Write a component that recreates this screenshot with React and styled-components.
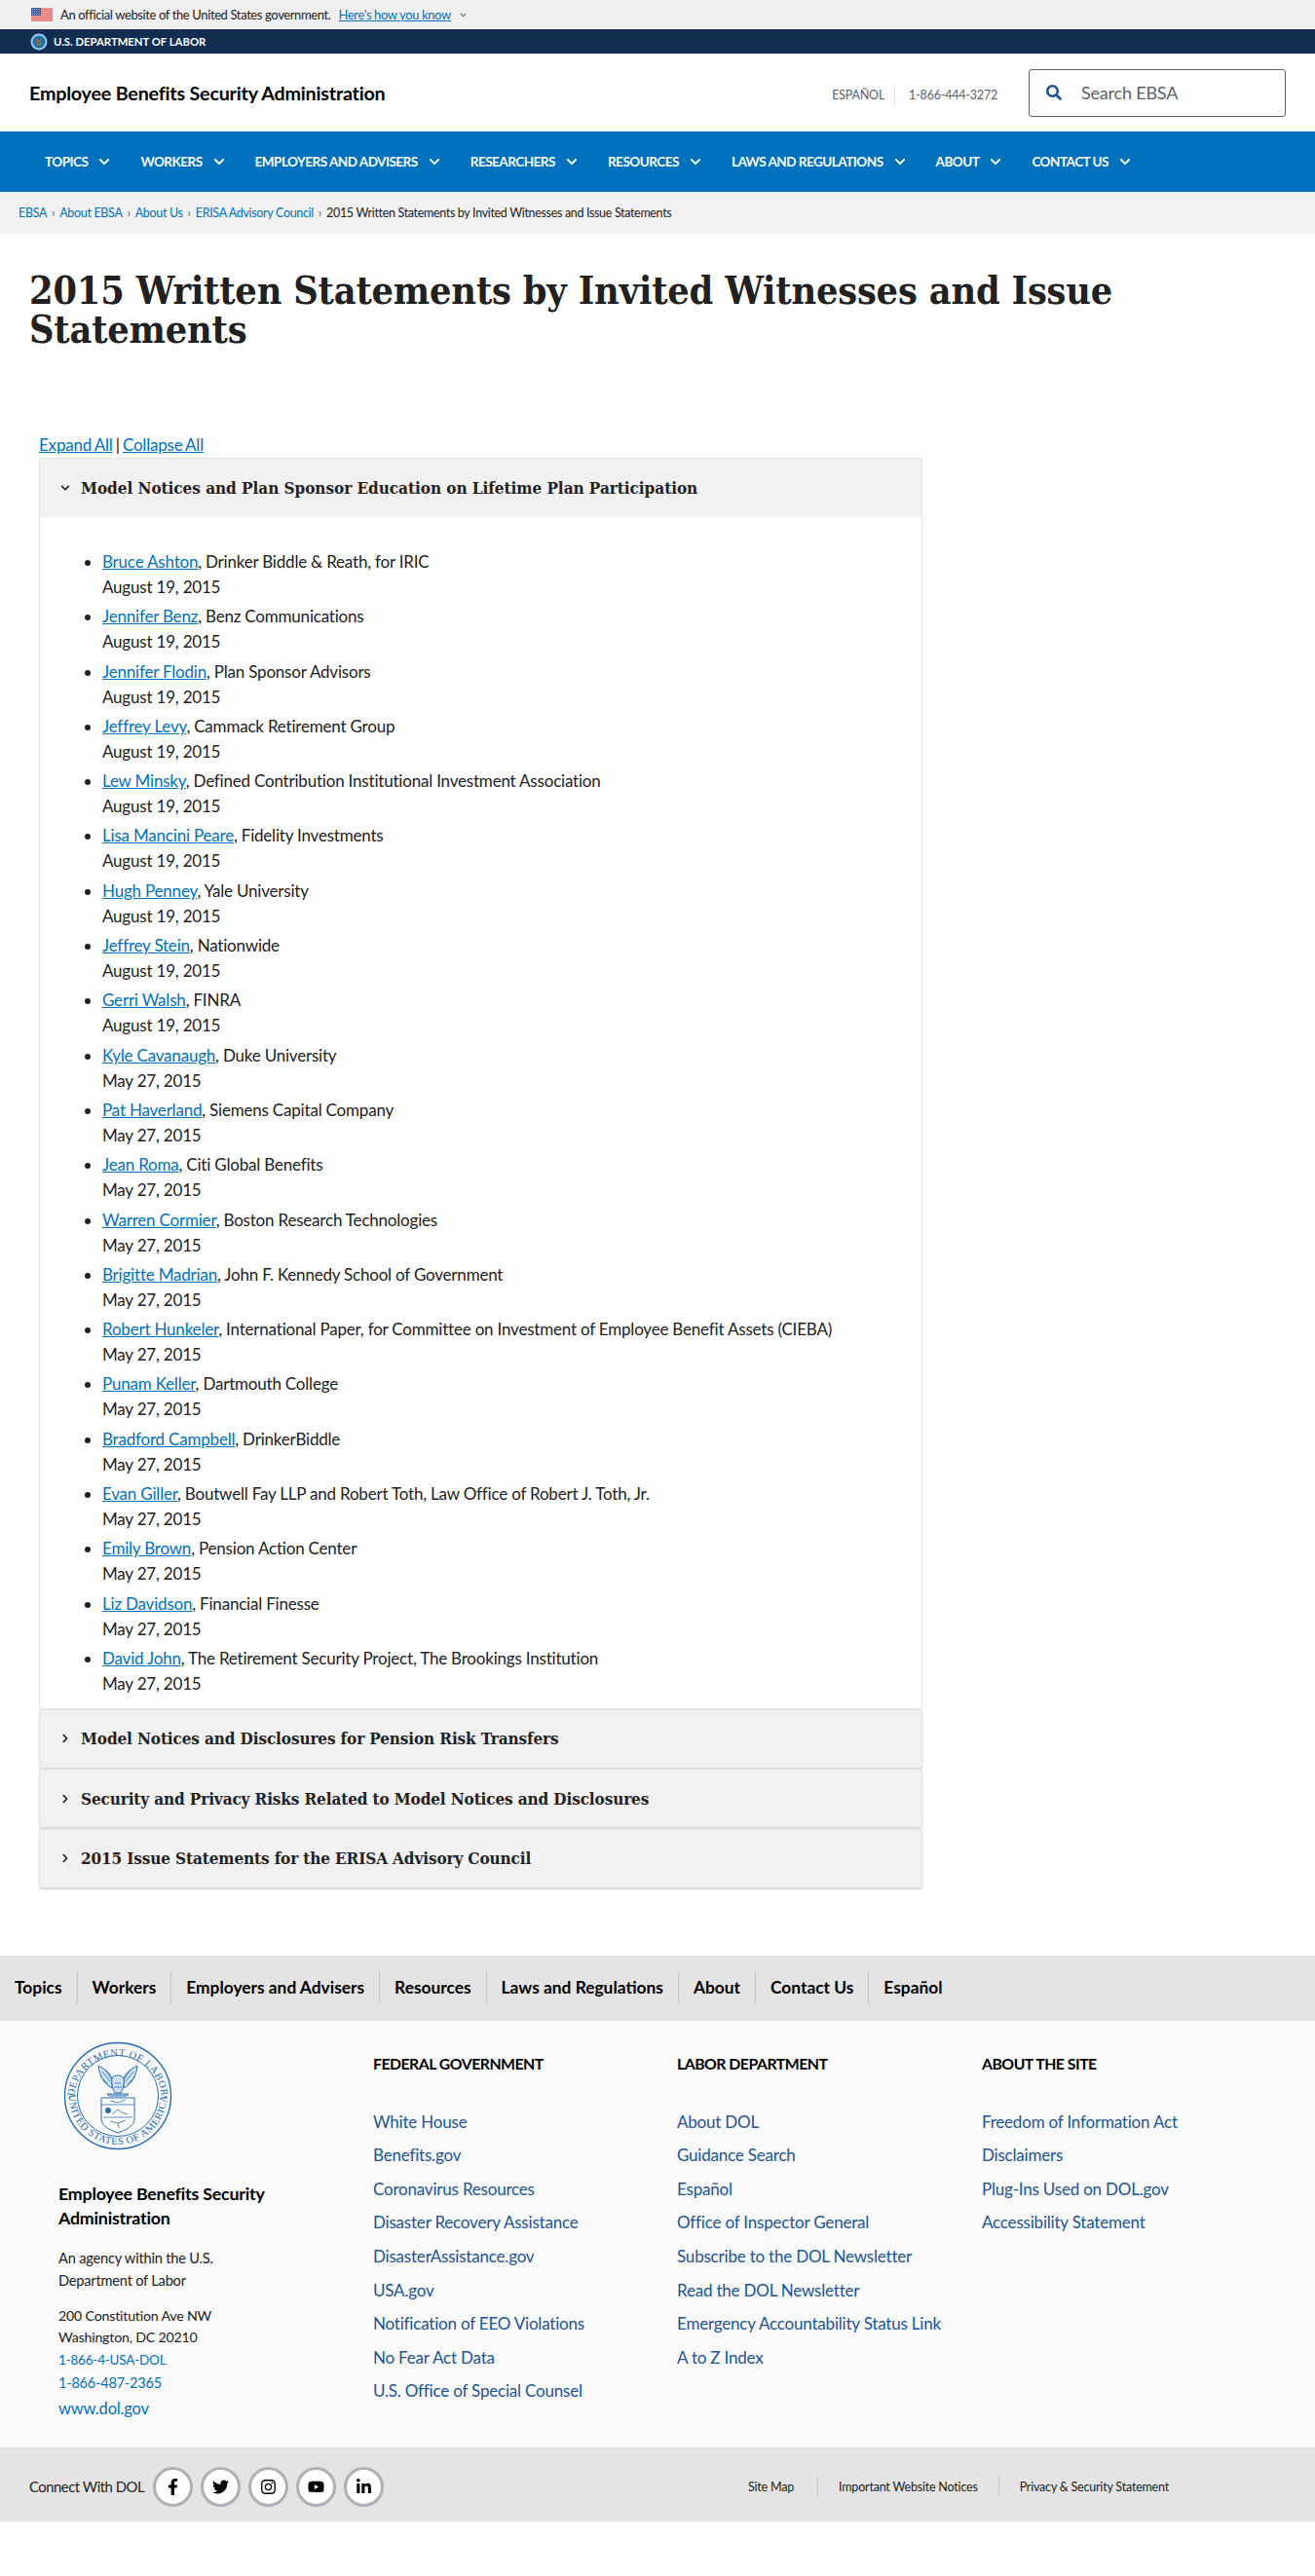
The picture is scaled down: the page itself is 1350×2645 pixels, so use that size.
import React from 'react';
import styled, { createGlobalStyle } from 'styled-components';
import { FaChevronDown, FaChevronRight, FaSearch, FaFacebookF, FaTwitter, FaInstagram, FaYoutube, FaLinkedinIn } from 'react-icons/fa';

const GlobalStyle = createGlobalStyle`
	html, body {
		margin: 0;
		padding: 0;
		background: #fff;
	}
	body {
		font-family: 'Lato', 'Liberation Sans', sans-serif;
		font-size: 17px;
		letter-spacing: -0.2px;
		color: #212121;
	}
`;

const SERIF = `'DejaVu Serif Condensed', 'DejaVu Serif', serif`;

const BannerBar = styled.div`
	display: flex;
	align-items: center;
	height: 30px;
	padding-left: 32px;
	background: #f0f0f0;
	font-size: 13px;
	letter-spacing: -0.38px;
	color: #212121;
`;

const BannerLink = styled.a`
	margin-left: 8px;
	color: #0071bc;
	text-decoration: underline;
`;

const BannerText = styled.span`
	margin-left: 8px;
`;

const BannerChevron = styled(FaChevronDown)`
	margin-left: 9px;
	font-size: 7px;
	color: #5b616b;
`;

const AgencyBar = styled.div`
	display: flex;
	align-items: center;
	height: 25px;
	padding-left: 31px;
	background: #112e51;
	color: #fff;
	font-size: 11.3px;
	font-weight: 700;
	letter-spacing: 0;
`;

const AgencyName = styled.span`
	margin-left: 6px;
`;

const SiteHeader = styled.header`
	display: flex;
	align-items: center;
	height: 80px;
	padding: 0 30px;
	background: #fff;
`;

const SiteTitle = styled.div`
	flex: 1;
	font-size: 19.7px;
	font-weight: 700;
	color: #000;
`;

const UtilityLink = styled.span`
	font-size: 12.5px;
	color: #5b616b;
	padding: ${(p) => (p.$first ? '4px 10px 4px 0' : '4px 32px 4px 14px')};
	border-left: ${(p) => (p.$first ? 'none' : '1px solid #e4e4e4')};
	margin-top: 5px;
`;

const SearchBox = styled.div`
	display: flex;
	align-items: center;
	width: 262px;
	height: 47px;
	border: 1px solid #5b616b;
	border-radius: 3px;
	margin-right: 0;
	color: #5b616b;
	font-size: 18px;
	svg {
		margin-left: 17px;
		margin-right: 20px;
		font-size: 16px;
		color: #205493;
	}
`;

const MainNav = styled.nav`
	display: flex;
	align-items: center;
	height: 62px;
	padding-left: 46px;
	background: #0071bc;
`;

const NavItem = styled.a`
	display: flex;
	align-items: center;
	margin-right: 31px;
	color: #fff;
	font-size: 13.5px;
	font-weight: 700;
	letter-spacing: -0.5px;
	svg {
		margin-left: 11px;
		font-size: 12px;
	}
`;

const Breadcrumbs = styled.div`
	display: flex;
	align-items: center;
	height: 43px;
	padding-left: 19px;
	background: #f1f1f1;
	font-size: 12.5px;
	letter-spacing: -0.33px;
`;

const Crumb = styled.a`
	color: #0071bc;
`;

const CrumbSep = styled.span`
	margin: 0 5px;
	color: #5b616b;
`;

const PageTitle = styled.h1`
	margin: 38px 0 86px 30px;
	width: 1200px;
	font-family: ${SERIF};
	font-size: 39.3px;
	line-height: 40px;
	font-weight: 700;
	color: #212121;
`;

const Content = styled.main`
	margin: 0 0 70px 40px;
	width: 907px;
`;

const ExpandLine = styled.div`
	line-height: 26px;
	word-spacing: -1px;
	a {
		color: #0071bc;
		text-decoration: underline;
	}
`;

const Panel = styled.section`
	border: 1px solid #e4e4e4;
	border-bottom: ${(p) => (p.$open ? '1px solid #e4e4e4' : 'none')};
	box-shadow: ${(p) => (p.$open ? 'none' : '0 2px 2px #d6d6d6')};
	border-radius: 2px;
	margin-bottom: ${(p) => (p.$open ? '0' : '1.3px')};
`;

const PanelHeader = styled.div`
	display: flex;
	align-items: center;
	height: ${(p) => (p.$open ? '60px' : '59px')};
	padding-left: 21px;
	background: #f1f1f1;
	font-family: ${SERIF};
	font-size: 17px;
	font-weight: 700;
	letter-spacing: ${(p) => (p.$open ? '-0.04px' : '-0.12px')};
	svg {
		font-size: 10px;
		margin-right: 11px;
	}
`;

const WitnessList = styled.ul`
	margin: 0;
	padding: 33px 0 12px 64px;
`;

const WitnessItem = styled.li`
	line-height: 26px;
	margin-bottom: 4.3px;
	&:last-child {
		margin-bottom: 0;
	}
	a {
		color: #0071bc;
		text-decoration: underline;
	}
`;

const FooterNav = styled.div`
	display: flex;
	align-items: center;
	height: 67px;
	background: #e4e4e4;
`;

const FooterNavItem = styled.a`
	padding: 4px 15px;
	line-height: 26px;
	font-size: 17.35px;
	font-weight: 700;
	letter-spacing: 0;
	color: #000;
	border-left: ${(p) => (p.$first ? 'none' : '1px solid #c8c8c8')};
`;

const FooterMain = styled.footer`
	display: grid;
	grid-template-columns: 323px 312px 313px 1fr;
	padding: 21px 0 26px 60px;
	background: #fafafa;
`;

const Seal = styled.svg`
	display: block;
	width: 112px;
	height: 112px;
	margin-left: 5px;
`;

const OrgName = styled.div`
	margin-top: 32px;
	font-size: 17.8px;
	font-weight: 700;
	line-height: 25px;
	width: 240px;
	color: #000;
`;

const OrgText = styled.div`
	margin-top: ${(p) => p.$top}px;
	font-size: ${(p) => p.$size}px;
	line-height: ${(p) => p.$line}px;
`;

const OrgLink = styled.a`
	display: block;
	color: #0071bc;
	font-size: ${(p) => p.$size}px;
	line-height: ${(p) => p.$line}px;
`;

const LinkColumn = styled.div`
	padding-top: 10px;
`;

const ColumnTitle = styled.div`
	margin-bottom: 30px;
	font-size: 15.8px;
	letter-spacing: -0.5px;
	font-weight: 700;
	line-height: 26px;
	color: #000;
`;

const FooterLink = styled.a`
	display: block;
	line-height: 34.6px;
	font-size: 17px;
	color: #205493;
`;

const BottomBar = styled.div`
	display: flex;
	align-items: center;
	height: 76px;
	padding: 5px 0 0 30px;
	box-sizing: border-box;
	background: #e4e4e4;
`;

const ConnectLabel = styled.span`
	margin-right: 9px;
	font-size: 14.8px;
	letter-spacing: -0.45px;
`;

const SocialLink = styled.a`
	display: flex;
	align-items: center;
	justify-content: center;
	box-sizing: border-box;
	width: 41px;
	height: 41px;
	margin-right: 8px;
	border: 3px solid #aeb0b5;
	border-radius: 50%;
	background: #fff;
	color: #000;
	font-size: 17px;
`;

const LegalLinks = styled.div`
	display: flex;
	margin-left: auto;
	margin-right: 129px;
	font-size: 12.5px;
	color: #212121;
`;

const LegalLink = styled.a`
	padding: ${(p) => (p.$first ? '3px 24px 3px 0' : '3px 21px')};
	border-left: ${(p) => (p.$first ? 'none' : '1px solid #c8c8c8')};
`;

const witnesses = [
	['Bruce Ashton', ', Drinker Biddle & Reath, for IRIC', 'August 19, 2015'],
	['Jennifer Benz', ', Benz Communications', 'August 19, 2015'],
	['Jennifer Flodin', ', Plan Sponsor Advisors', 'August 19, 2015'],
	['Jeffrey Levy', ', Cammack Retirement Group', 'August 19, 2015'],
	['Lew Minsky', ', Defined Contribution Institutional Investment Association', 'August 19, 2015'],
	['Lisa Mancini Peare', ', Fidelity Investments', 'August 19, 2015'],
	['Hugh Penney', ', Yale University', 'August 19, 2015'],
	['Jeffrey Stein', ', Nationwide', 'August 19, 2015'],
	['Gerri Walsh', ', FINRA', 'August 19, 2015'],
	['Kyle Cavanaugh', ', Duke University', 'May 27, 2015'],
	['Pat Haverland', ', Siemens Capital Company', 'May 27, 2015'],
	['Jean Roma', ', Citi Global Benefits', 'May 27, 2015'],
	['Warren Cormier', ', Boston Research Technologies', 'May 27, 2015'],
	['Brigitte Madrian', ', John F. Kennedy School of Government', 'May 27, 2015'],
	['Robert Hunkeler', ', International Paper, for Committee on Investment of Employee Benefit Assets (CIEBA)', 'May 27, 2015'],
	['Punam Keller', ', Dartmouth College', 'May 27, 2015'],
	['Bradford Campbell', ', DrinkerBiddle', 'May 27, 2015'],
	['Evan Giller', ', Boutwell Fay LLP and Robert Toth, Law Office of Robert J. Toth, Jr.', 'May 27, 2015'],
	['Emily Brown', ', Pension Action Center', 'May 27, 2015'],
	['Liz Davidson', ', Financial Finesse', 'May 27, 2015'],
	['David John', ', The Retirement Security Project, The Brookings Institution', 'May 27, 2015'],
];

const navItems = ['TOPICS', 'WORKERS', 'EMPLOYERS AND ADVISERS', 'RESEARCHERS', 'RESOURCES', 'LAWS AND REGULATIONS', 'ABOUT', 'CONTACT US'];
const footerNavItems = ['Topics', 'Workers', 'Employers and Advisers', 'Resources', 'Laws and Regulations', 'About', 'Contact Us', 'Español'];
const closedPanels = [
	'Model Notices and Disclosures for Pension Risk Transfers',
	'Security and Privacy Risks Related to Model Notices and Disclosures',
	'2015 Issue Statements for the ERISA Advisory Council',
];
const linkColumns = [
	['FEDERAL GOVERNMENT', ['White House', 'Benefits.gov', 'Coronavirus Resources', 'Disaster Recovery Assistance', 'DisasterAssistance.gov', 'USA.gov', 'Notification of EEO Violations', 'No Fear Act Data', 'U.S. Office of Special Counsel']],
	['LABOR DEPARTMENT', ['About DOL', 'Guidance Search', 'Español', 'Office of Inspector General', 'Subscribe to the DOL Newsletter', 'Read the DOL Newsletter', 'Emergency Accountability Status Link', 'A to Z Index']],
	['ABOUT THE SITE', ['Freedom of Information Act', 'Disclaimers', 'Plug-Ins Used on DOL.gov', 'Accessibility Statement']],
];

const Flag = () => (
	<svg width="22" height="15" viewBox="0 0 22 15">
		<rect width="22" height="15" fill="#fff" />
		{[0, 2, 4, 6, 8, 10, 12].map((y) => (
			<rect key={y} y={y + 0.5} width="22" height="1.15" fill="#d83933" />
		))}
		<rect width="10" height="8" fill="#3c5a9a" />
		{[1.5, 4, 6.5].map((y) => [1.5, 3.7, 5.9, 8.1].map((x) => <circle key={x + '-' + y} cx={x} cy={y} r="0.5" fill="#fff" />))}
	</svg>
);

const MiniSeal = () => (
	<svg width="18" height="18" viewBox="0 0 18 18">
		<circle cx="9" cy="9" r="8.5" fill="#9ec7e8" />
		<circle cx="9" cy="9" r="6.5" fill="#1a6fa8" />
		<path d="M6.5 5.5 L9 7 L11.5 5.5 L11 9 L11 12 L9 13.5 L7 12 L7 9 Z" fill="#b5652a" />
		<rect x="8" y="8" width="2" height="3.5" fill="#2e7d4f" />
	</svg>
);

const DolSeal = () => (
	<Seal viewBox="0 0 112 112">
		<defs>
			<path id="sealTop" d="M 11 60 A 45 45 0 0 1 101 60" />
			<path id="sealBottom" d="M 6 56 A 50 50 0 0 0 106 56" />
		</defs>
		<g fill="none" stroke="#2a6cb0">
			<circle cx="56" cy="56" r="54.5" strokeWidth="1.4" />
			<circle cx="56" cy="56" r="41.5" strokeWidth="1" />
		</g>
		<text fontFamily="'Liberation Serif', serif" fontSize="10.5" fill="#2a6cb0" letterSpacing="0.6">
			<textPath href="#sealTop" startOffset="50%" textAnchor="middle">DEPARTMENT OF LABOR</textPath>
		</text>
		<text fontFamily="'Liberation Serif', serif" fontSize="10.5" fill="#2a6cb0" letterSpacing="0.6">
			<textPath href="#sealBottom" startOffset="50%" textAnchor="middle">UNITED STATES OF AMERICA</textPath>
		</text>
		<circle cx="6.5" cy="58" r="1" fill="#2a6cb0" />
		<circle cx="105.5" cy="58" r="1" fill="#2a6cb0" />
		<g fill="#cfe0f0" stroke="#2a6cb0" strokeWidth="1">
			<path d="M36 25 C41 28 48 31 50 39 L50 48 C43 45 37 36 36 25 Z" />
			<path d="M76 25 C71 28 64 31 62 39 L62 48 C69 45 75 36 76 25 Z" />
			<path d="M50 38 C52 34 60 34 62 38 C63 43 61 50 59 53 L53 53 C51 50 49 43 50 38 Z" />
			<path d="M45 54 L67 54 L65 56 L47 56 Z" />
		</g>
		<g fill="none" stroke="#2a6cb0" strokeWidth="0.8">
			<path d="M40 31 L48 41 M43 29 L49 38 M38 36 L46 44" />
			<path d="M72 31 L64 41 M69 29 L63 38 M74 36 L66 44" />
			<path d="M53 43 L59 43 M52 47 L60 47" />
		</g>
		<g fill="#fff" stroke="#2a6cb0" strokeWidth="1">
			<path d="M39 58 L73 58 L73 80 C73 87 64 91 56 94 C48 91 39 87 39 80 Z" />
		</g>
		<g fill="none" stroke="#2a6cb0" strokeWidth="0.8">
			<path d="M39 65 L73 65" />
			<path d="M41 78 L71 78" />
			<path d="M48 61 L56 63 L64 60" />
			<path d="M50 75 L56 70 L60 73 L66 75" />
			<path d="M48 82 L56 84 L64 81 M56 84 L57 89" />
		</g>
		<circle cx="46" cy="71" r="3" fill="#2a6cb0" />
	</Seal>
);

const Panels = () => (
	<>
		<Panel $open>
			<PanelHeader $open>
				<FaChevronDown />
				Model Notices and Plan Sponsor Education on Lifetime Plan Participation
			</PanelHeader>
			<WitnessList>
				{witnesses.map(([name, rest, date]) => (
					<WitnessItem key={name}>
						<a>{name}</a>
						{rest}
						<br />
						{date}
					</WitnessItem>
				))}
			</WitnessList>
		</Panel>
		{closedPanels.map((title) => (
			<Panel key={title}>
				<PanelHeader>
					<FaChevronRight />
					{title}
				</PanelHeader>
			</Panel>
		))}
	</>
);

export default function App() {
	return (
		<>
			<GlobalStyle />
			<BannerBar>
				<Flag />
				<BannerText>An official website of the United States government.</BannerText>
				<BannerLink>Here's how you know</BannerLink>
				<BannerChevron />
			</BannerBar>
			<AgencyBar>
				<MiniSeal />
				<AgencyName>U.S. DEPARTMENT OF LABOR</AgencyName>
			</AgencyBar>
			<SiteHeader>
				<SiteTitle>Employee Benefits Security Administration</SiteTitle>
				<UtilityLink $first>ESPAÑOL</UtilityLink>
				<UtilityLink>1-866-444-3272</UtilityLink>
				<SearchBox>
					<FaSearch />
					Search EBSA
				</SearchBox>
			</SiteHeader>
			<MainNav>
				{navItems.map((item) => (
					<NavItem key={item}>
						{item}
						<FaChevronDown />
					</NavItem>
				))}
			</MainNav>
			<Breadcrumbs>
				<Crumb>EBSA</Crumb>
				<CrumbSep>›</CrumbSep>
				<Crumb>About EBSA</Crumb>
				<CrumbSep>›</CrumbSep>
				<Crumb>About Us</Crumb>
				<CrumbSep>›</CrumbSep>
				<Crumb>ERISA Advisory Council</Crumb>
				<CrumbSep>›</CrumbSep>
				<span>2015 Written Statements by Invited Witnesses and Issue Statements</span>
			</Breadcrumbs>
			<PageTitle>2015 Written Statements by Invited Witnesses and Issue Statements</PageTitle>
			<Content>
				<ExpandLine>
					<a>Expand All</a> | <a>Collapse All</a>
				</ExpandLine>
				<Panels />
			</Content>
			<FooterNav>
				{footerNavItems.map((item, i) => (
					<FooterNavItem key={item} $first={i === 0}>
						{item}
					</FooterNavItem>
				))}
			</FooterNav>
			<FooterMain>
				<div>
					<DolSeal />
					<OrgName>Employee Benefits Security Administration</OrgName>
					<OrgText $top={17} $line={23} $size={14.6}>
						An agency within the U.S.
						<br />
						Department of Labor
					</OrgText>
					<OrgText $top={14} $line={22.5} $size={14.2}>
						200 Constitution Ave NW
						<br />
						Washington, DC 20210
					</OrgText>
					<OrgLink $size={13.5} $line={23}>1-866-4-USA-DOL</OrgLink>
					<OrgLink $size={14.5} $line={24}>1-866-487-2365</OrgLink>
					<OrgLink $size={16.5} $line={28}>www.dol.gov</OrgLink>
				</div>
				{linkColumns.map(([title, links]) => (
					<LinkColumn key={title}>
						<ColumnTitle>{title}</ColumnTitle>
						{links.map((link) => (
							<FooterLink key={link}>{link}</FooterLink>
						))}
					</LinkColumn>
				))}
			</FooterMain>
			<BottomBar>
				<ConnectLabel>Connect With DOL</ConnectLabel>
				<SocialLink><FaFacebookF /></SocialLink>
				<SocialLink><FaTwitter /></SocialLink>
				<SocialLink><FaInstagram /></SocialLink>
				<SocialLink><FaYoutube /></SocialLink>
				<SocialLink><FaLinkedinIn /></SocialLink>
				<LegalLinks>
					<LegalLink $first>Site Map</LegalLink>
					<LegalLink>Important Website Notices</LegalLink>
					<LegalLink>Privacy &amp; Security Statement</LegalLink>
				</LegalLinks>
			</BottomBar>
		</>
	);
}
